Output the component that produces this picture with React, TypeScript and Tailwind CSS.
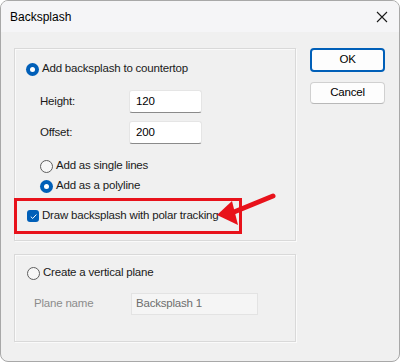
import React from "react";

function Radio({ checked, disabled }: { checked?: boolean; disabled?: boolean }) {
  if (checked) {
    return (
      <span className="w-[13px] h-[13px] rounded-full bg-[#005fb8] flex items-center justify-center shrink-0">
        <span className="w-[5px] h-[5px] rounded-full bg-white" />
      </span>
    );
  }
  return (
    <span
      className={
        "w-[13px] h-[13px] rounded-full border bg-[#f7f7f7] shrink-0 " +
        (disabled ? "border-[#a0a0a0]" : "border-[#5f5f5f]")
      }
    />
  );
}

function Checkbox() {
  return (
    <span className="w-[12px] h-[12px] rounded-[3px] bg-[#005fb8] flex items-center justify-center shrink-0">
      <svg width="9" height="9" viewBox="0 0 10 10">
        <path d="M2 5.2 L4.1 7.2 L8.2 2.8" fill="none" stroke="white" strokeWidth="1.1" />
      </svg>
    </span>
  );
}

function TextInput({ value }: { value: string }) {
  return (
    <div className="w-[73px] h-[23px] shrink-0 bg-white border border-[#e5e5e5] border-b-[#8a8a8a] rounded-[3px] flex items-center pl-[6px] text-black">
      {value}
    </div>
  );
}

export default function App() {
  return (
    <div
      className="w-[400px] h-[362px] bg-[#f0f0f0] border border-[#a8a8a8] rounded-[8px] overflow-hidden flex flex-col text-[11.5px] tracking-[-0.2px] text-[#1a1a1a]"
      style={{ fontFamily: '"Liberation Sans", Arial, sans-serif' }}
    >
      <div className="h-[31px] bg-[#f5f5f7] flex items-center justify-between pl-[9px] pr-[11px] shrink-0">
        <span className="text-[12px] tracking-normal text-black">Backsplash</span>
        <svg width="12" height="12" viewBox="0 0 12 12">
          <path d="M1 1 L11 11 M11 1 L1 11" stroke="#1a1a1a" strokeWidth="1.1" />
        </svg>
      </div>
      <div className="flex pl-[13px] pt-[16px]">
        <div className="w-[282px] flex flex-col gap-[13px]">
          {/* Group 1 */}
          <div className="relative h-[193px] border border-[#d9d9d9] shadow-[inset_1px_1px_0_#fafafa,1px_1px_0_#fafafa] flex flex-col pl-[11px] pt-[10px]">
            <div className="h-[20px] flex items-center gap-[3px]">
              <Radio checked />
              <span>Add backsplash to countertop</span>
            </div>
            <div className="h-[23px] mt-[11px] flex items-center">
              <span className="w-[103px] shrink-0 pl-[14px]">Height:</span>
              <TextInput value="120" />
            </div>
            <div className="h-[23px] mt-[8px] flex items-center">
              <span className="w-[103px] shrink-0 pl-[14px]">Offset:</span>
              <TextInput value="200" />
            </div>
            <div className="h-[20px] mt-[12px] pl-[14px] flex items-center gap-[3px]">
              <Radio />
              <span>Add as single lines</span>
            </div>
            <div className="h-[20px] pl-[14px] flex items-center gap-[3px]">
              <Radio checked />
              <span>Add as a polyline</span>
            </div>
            <div className="-ml-[12px] mt-[2px] w-[228px] h-[36px] border-[3px] border-[#e8121b] flex items-center pl-[10px] gap-[3px] whitespace-nowrap">
              <Checkbox />
              <span>Draw backsplash with polar tracking</span>
            </div>
            <svg
              className="absolute left-[200px] top-[143px]"
              width="64"
              height="36"
              viewBox="0 0 64 36"
            >
              <path d="M58 4 L19 20" stroke="#e8121b" strokeWidth="5" strokeLinecap="round" />
              <path d="M2 23 L17 9 L23 33 Z" fill="#e8121b" />
            </svg>
          </div>
          {/* Group 2 */}
          <div className="h-[88px] border border-[#d9d9d9] shadow-[inset_1px_1px_0_#fafafa,1px_1px_0_#fafafa] flex flex-col pl-[12px] pt-[8px]">
            <div className="h-[20px] flex items-center gap-[3px]">
              <Radio />
              <span>Create a vertical plane</span>
            </div>
            <div className="h-[22px] mt-[10px] flex items-center">
              <span className="w-[104px] shrink-0 pl-[7px] text-[#8c8c8c]">Plane name</span>
              <div className="w-[127px] h-[22px] bg-[#f5f5f5] border border-[#e3e3e3] flex items-center pl-[4px] text-[#6d6d6d]">
                Backsplash 1
              </div>
            </div>
          </div>
        </div>
        <div className="ml-[14px] flex flex-col gap-[10px]">
          <button className="w-[75px] h-[24px] bg-[#fdfdfd] border-2 border-[#005fb8] rounded-[4px] flex items-center justify-center text-black">
            OK
          </button>
          <button className="w-[75px] h-[22px] bg-[#fdfdfd] border border-[#d0d0d0] border-b-[#b8b8b8] rounded-[4px] flex items-center justify-center text-black">
            Cancel
          </button>
        </div>
      </div>
    </div>
  );
}
